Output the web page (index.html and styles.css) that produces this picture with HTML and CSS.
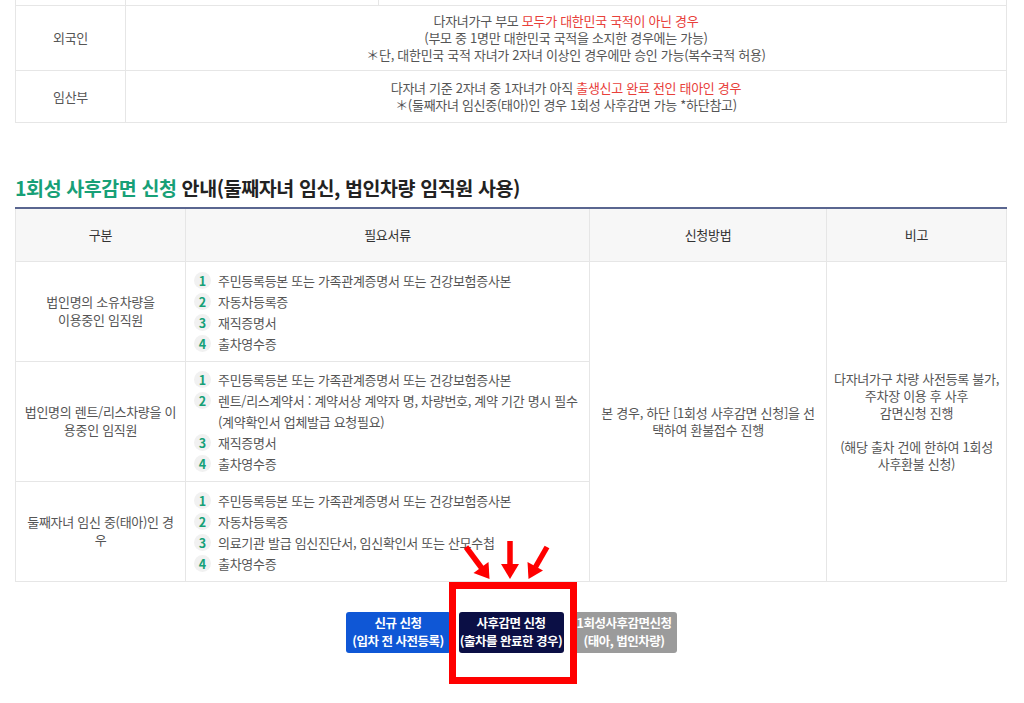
FILE: index.html
```html
<!DOCTYPE html>
<html lang="ko">
<head>
<meta charset="utf-8">
<link rel="stylesheet" href="styles.css">
</head>
<body>
<div class="page">
  <table class="tbl top-tbl">
    <colgroup><col class="c-a"><col class="c-b"><col></colgroup>
    <tr class="prev-row"><td></td><td></td><td></td></tr>
    <tr class="row-foreign">
      <td class="label">외국인</td>
      <td colspan="2" class="desc">다자녀가구 부모 <span class="red">모두가 대한민국 국적이 아닌 경우</span><br>(부모 중 1명만 대한민국 국적을 소지한 경우에는 가능)<br>＊단, 대한민국 국적 자녀가 2자녀 이상인 경우에만 승인 가능(복수국적 허용)</td>
    </tr>
    <tr class="row-preg">
      <td class="label">임산부</td>
      <td colspan="2" class="desc">다자녀 기준 2자녀 중 1자녀가 아직 <span class="red">출생신고 완료 전인 태아인 경우</span><br>＊(둘째자녀 임신중(태아)인 경우 1회성 사후감면 가능 *하단참고)</td>
    </tr>
  </table>

  <h2 class="title"><span class="green">1회성 사후감면 신청</span> 안내(둘째자녀 임신, 법인차량 임직원 사용)</h2>

  <table class="tbl doc-tbl">
    <colgroup><col class="c1"><col class="c2"><col class="c3"><col></colgroup>
    <thead>
      <tr><th>구분</th><th>필요서류</th><th>신청방법</th><th>비고</th></tr>
    </thead>
    <tbody>
      <tr>
        <td class="who">법인명의 소유차량을<br>이용중인 임직원</td>
        <td class="docs">
          <ul>
            <li><span class="num">1</span><span>주민등록등본 또는 가족관계증명서 또는 건강보험증사본</span></li>
            <li><span class="num">2</span><span>자동차등록증</span></li>
            <li><span class="num">3</span><span>재직증명서</span></li>
            <li><span class="num">4</span><span>출차영수증</span></li>
          </ul>
        </td>
        <td class="method" rowspan="3">본 경우, 하단 [1회성 사후감면 신청]을 선<br>택하여 환불접수 진행</td>
        <td class="note" rowspan="3">다자녀가구 차량 사전등록 불가,<br>주차장 이용 후 사후<br>감면신청 진행<br><br>(해당 출차 건에 한하여 1회성<br>사후환불 신청)</td>
      </tr>
      <tr>
        <td class="who">법인명의 렌트/리스차량을 이<br>용중인 임직원</td>
        <td class="docs">
          <ul>
            <li><span class="num">1</span><span>주민등록등본 또는 가족관계증명서 또는 건강보험증사본</span></li>
            <li><span class="num">2</span><span>렌트/리스계약서 : 계약서상 계약자 명, 차량번호, 계약 기간 명시 필수<br>(계약확인서 업체발급 요청필요)</span></li>
            <li><span class="num">3</span><span>재직증명서</span></li>
            <li><span class="num">4</span><span>출차영수증</span></li>
          </ul>
        </td>
      </tr>
      <tr>
        <td class="who">둘째자녀 임신 중(태아)인 경<br>우</td>
        <td class="docs">
          <ul>
            <li><span class="num">1</span><span>주민등록등본 또는 가족관계증명서 또는 건강보험증사본</span></li>
            <li><span class="num">2</span><span>자동차등록증</span></li>
            <li><span class="num">3</span><span>의료기관 발급 임신진단서, 임신확인서 또는 산모수첩</span></li>
            <li><span class="num">4</span><span>출차영수증</span></li>
          </ul>
        </td>
      </tr>
    </tbody>
  </table>

  <div class="btn-area">
    <div class="btn-group">
      <a class="btn btn-blue">신규 신청<br>(입차 전 사전등록)</a>
      <a class="btn btn-navy">사후감면 신청<br>(출차를 완료한 경우)</a>
      <a class="btn btn-gray">1회성사후감면신청<br>(태아, 법인차량)</a>
      <svg class="arrows" width="90" height="42" viewBox="0 0 90 42">
        <g fill="#ff0000" stroke="#ff0000">
          <line x1="5" y1="7" x2="21" y2="28.5" stroke-width="5.5"/>
          <polygon points="28.5,39 12.5,33 27.5,22" stroke="none"/>
          <line x1="49" y1="1" x2="49" y2="26" stroke-width="5.5"/>
          <polygon points="49,39 40,24 58,24" stroke="none"/>
          <line x1="86" y1="7" x2="74.5" y2="27" stroke-width="5.5"/>
          <polygon points="67.5,39 66.5,22 82,30.5" stroke="none"/>
        </g>
      </svg>
      <div class="highlight"></div>
    </div>
  </div>
</div>
</body>
</html>
```

FILE: styles.css
```css
* { box-sizing: border-box; }

body {
  margin: 0;
  background: #fff;
  font-family: "Noto Sans CJK KR", "Noto Sans", sans-serif;
  font-size: 13px;
  letter-spacing: -0.3px;
  color: #555;
}

.page {
  width: 992px;
  margin-left: 15px;
}

.tbl {
  width: 992px;
  border-collapse: collapse;
  table-layout: fixed;
}

.tbl td, .tbl th {
  border: 1px solid #e6e6e6;
  text-align: center;
  vertical-align: middle;
  padding: 0;
}

/* top table */
.top-tbl .c-a { width: 110px; }
.top-tbl .c-b { width: 253px; }

.top-tbl .prev-row td { height: 5px; border-top: 0; }

.top-tbl .desc {
  line-height: 17px;
  padding: 6px 10px;
}

.row-foreign td { height: 65px; }
.row-preg td { height: 52px; }

.red { color: #e8403a; }

/* heading */
.title {
  margin: 52px 0 6px;
  font-size: 19.5px;
  line-height: 26px;
  font-weight: 700;
  letter-spacing: -0.4px;
  color: #222;
}

.green { color: #17a077; }

/* documents table */
.doc-tbl thead th { border-top: 2px solid #5a6690; }
.doc-tbl .c1 { width: 170px; }
.doc-tbl .c2 { width: 404px; }
.doc-tbl .c3 { width: 237px; }

.doc-tbl th {
  height: 54px;
  background: #f7f7f7;
  font-weight: 400;
  color: #333;
}

.doc-tbl .who {
  line-height: 18px;
  padding: 0 4px;
  white-space: nowrap;
}

.doc-tbl .docs {
  text-align: left;
  padding: 7.5px 4px 7px 8px;
}

.docs ul {
  margin: 0;
  padding: 0;
  list-style: none;
}

.docs li {
  display: flex;
  align-items: flex-start;
  line-height: 21px;
}

.num {
  flex: none;
  width: 17px;
  height: 17px;
  margin: 2px 7px 0 0;
  border-radius: 50%;
  background: #f1f1f1;
  color: #17a077;
  font-weight: 700;
  font-size: 12.5px;
  line-height: 17px;
  text-align: center;
  letter-spacing: 0;
}

.doc-tbl .method,
.doc-tbl .note {
  line-height: 17px;
  padding: 0 6px;
}

/* buttons */
.btn-area {
  display: flex;
  justify-content: center;
  margin-top: 30px;
  padding-bottom: 40px;
}

.btn-group {
  position: relative;
  display: flex;
  gap: 8px;
}

.btn {
  display: flex;
  align-items: center;
  justify-content: center;
  width: 105px;
  height: 41px;
  border-radius: 3px;
  color: #fff;
  font-size: 12.5px;
  font-weight: 700;
  line-height: 18px;
  letter-spacing: -0.5px;
  text-align: center;
  white-space: nowrap;
  text-decoration: none;
}

.btn-blue { background: #0f57d6; }
.btn-navy { background: #0b0f45; }
.btn-gray { background: #9b9b9b; }

.highlight {
  position: absolute;
  left: 103px;
  top: -30px;
  width: 128px;
  height: 102px;
  border: 7px solid #ff0000;
}

.arrows {
  position: absolute;
  left: 115px;
  top: -72px;
}
```
